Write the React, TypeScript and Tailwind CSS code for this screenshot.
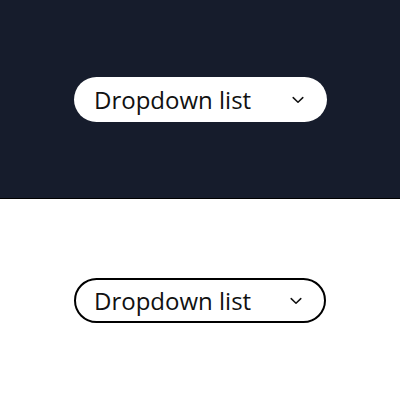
import React from "react";

function Chevron() {
  return (
    <svg width="12" height="8" viewBox="0 0 12 8" fill="none" aria-hidden="true">
      <path d="M1.2 1.6 L6 6.2 L10.8 1.6" stroke="#111" strokeWidth="1.5" strokeLinecap="round" strokeLinejoin="round" />
    </svg>
  );
}

function Dropdown({ outlined }: { outlined?: boolean }) {
  return (
    <button
      type="button"
      className={
        outlined
          ? "flex h-[45px] w-[252px] items-center justify-between rounded-full border-2 border-black bg-white pl-[18px] pr-[22px]"
          : "flex h-[45px] w-[253px] items-center justify-between rounded-full bg-white pl-[20px] pr-[23px]"
      }
    >
      <span className="text-[24px] leading-none text-[#111] [font-family:'Open_Sans',sans-serif]">Dropdown list</span>
      <Chevron />
    </button>
  );
}

export default function App() {
  return (
    <div className="flex h-[400px] w-[400px] flex-col bg-white">
      <div className="flex h-[199px] items-start justify-center border-b border-black bg-[#161c2c] pt-[77px] pl-[1px]">
        <Dropdown />
      </div>
      <div className="flex flex-1 items-start justify-center pt-[79px]">
        <Dropdown outlined />
      </div>
    </div>
  );
}
